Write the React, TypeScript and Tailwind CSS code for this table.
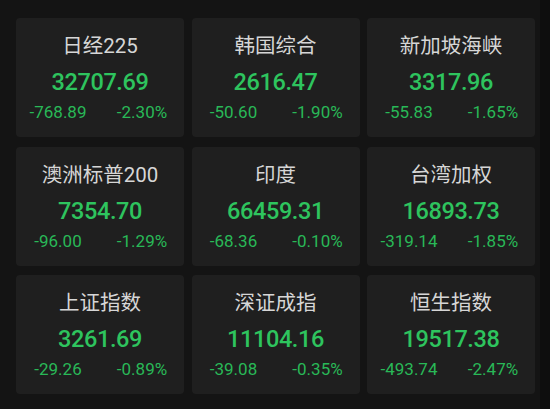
import React from "react";

const data = [
  { name: "日经225", value: "32707.69", chg: "-768.89", pct: "-2.30%" },
  { name: "韩国综合", value: "2616.47", chg: "-50.60", pct: "-1.90%" },
  { name: "新加坡海峡", value: "3317.96", chg: "-55.83", pct: "-1.65%" },
  { name: "澳洲标普200", value: "7354.70", chg: "-96.00", pct: "-1.29%" },
  { name: "印度", value: "66459.31", chg: "-68.36", pct: "-0.10%" },
  { name: "台湾加权", value: "16893.73", chg: "-319.14", pct: "-1.85%" },
  { name: "上证指数", value: "3261.69", chg: "-29.26", pct: "-0.89%" },
  { name: "深证成指", value: "11104.16", chg: "-39.08", pct: "-0.35%" },
  { name: "恒生指数", value: "19517.38", chg: "-493.74", pct: "-2.47%" },
];

export default function App() {
  return (
    <div
      className="w-[550px] h-[409px] bg-[#141414] flex overflow-hidden"
      style={{ fontFamily: "Roboto, 'Noto Sans CJK SC', sans-serif" }}
    >
      <div className="w-[540px] pl-[16px] pt-[18px]">
        <div className="w-[519px] grid grid-cols-3 gap-x-[7.5px] gap-y-[9.5px]">
          {data.map((d) => (
            <div
              key={d.name}
              className="h-[119px] rounded-[4px] bg-[#1f1f1f] flex flex-col items-center"
            >
              <div className="mt-[15px] h-[26px] leading-[26px] text-[20.5px] text-[#d6d6d6]">
                {d.name}
              </div>
              <div className="mt-[8px] h-[30px] leading-[30px] text-[23.5px] font-medium text-[#2ec45e] tracking-[-0.4px]">
                {d.value}
              </div>
              <div className="mt-[4px] w-full flex text-[17px] leading-[22px] text-[#29b857]">
                <div className="flex-1 text-center">{d.chg}</div>
                <div className="flex-1 text-center">{d.pct}</div>
              </div>
            </div>
          ))}
        </div>
      </div>
      <div className="w-[10px] h-full bg-[#0e0e0e]" />
    </div>
  );
}
